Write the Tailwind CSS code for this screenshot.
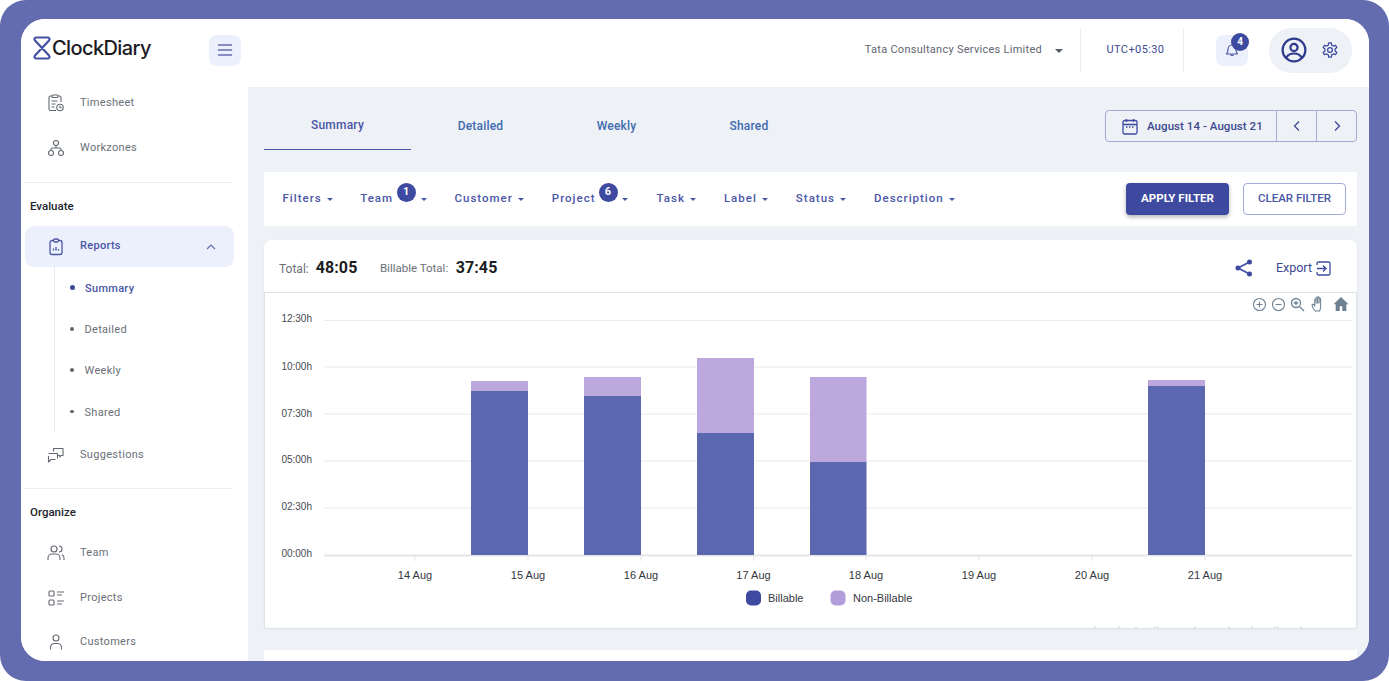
<!DOCTYPE html>
<html lang="en">
  <head>
    <meta charset="UTF-8" />
    <title>ClockDiary</title>
    <script src="https://cdn.jsdelivr.net/npm/@tailwindcss/browser@4"></script>
  </head>
  <body class="bg-white font-['Roboto',sans-serif]">
    <div class="h-[681px] w-[1389px] overflow-hidden rounded-[26px] bg-[#636cae] pt-[19px] pl-[21px]">
      <div class="flex h-[642px] w-[1348px] flex-col overflow-hidden rounded-[24px] bg-white">
        <!-- header -->
        <header class="flex h-[68px] shrink-0 items-center bg-white pb-[6px]">
          <div class="flex w-[227px] shrink-0 items-center pl-[12px]">
            <svg class="-mt-[4px] h-[24px] w-[18px]" viewBox="0 0 18 24" fill="none" stroke-width="2.2" stroke-linejoin="round">
              <path d="M3 1.500H15C16.500 1.500 17 3.200 16 4.400L2 19.600C1 20.800 1.500 22.500 3 22.500H15C16.500 22.500 17 20.800 16 19.600L2 4.400C1 3.200 1.500 1.500 3 1.500Z" stroke="#4451a3" />
            </svg>
            <span class="-mt-[4px] ml-[1px] font-['Inter',sans-serif] text-[20px] leading-none font-medium tracking-[-0.6px] text-[#1b1b1f]">ClockDiary</span>
            <button class="mr-[7px] ml-auto flex h-[31px] w-[32px] shrink-0 items-center justify-center rounded-[8px] bg-[#ecf0fd]">
              <svg class="h-[16px] w-[16px]" viewBox="0 0 16 16" fill="none" stroke="#636cae" stroke-width="1.5" stroke-linecap="round"><path d="M1.500 3h13M1.500 8h13M1.500 13h13" /></svg>
            </button>
          </div>
          <div class="flex flex-1 items-center justify-end">
            <span class="text-[11px] tracking-[0.27px] text-[#5f6670]">Tata Consultancy Services Limited</span>
            <span class="mt-[2px] ml-[13px] h-0 w-0 border-x-[4.5px] border-t-[4.5px] border-x-transparent border-t-[#555b66]"></span>
            <span class="ml-[17px] h-[45px] w-px bg-[#eceef2]"></span>
            <span class="w-[102px] pl-[7px] text-center text-[11px] tracking-[0.4px] text-[#3d4a8f]">UTC+05:30</span>
            <span class="h-[45px] w-px bg-[#eceef2]"></span>
            <div class="relative ml-[32px] flex h-[31px] w-[32px] items-center justify-center rounded-[8px] bg-[#ecf0fd]">
              <svg class="h-[16px] w-[16px]" viewBox="0 0 16 16" fill="none" stroke="#4a56a6" stroke-width="1.2" stroke-linejoin="round"><path d="M2.500 12c1-1 1.500-2 1.500-4.500 0-2.500 1.700-4.500 4-4.500s4 2 4 4.500c0 2.500.5 3.500 1.500 4.500Z" /><path d="M6.500 12.500a1.600 1.600 0 0 0 3 0" /></svg>
              <span class="absolute -top-[2px] left-[15px] flex h-[18px] w-[18px] items-center justify-center rounded-full bg-[#3d4a9f] text-[10px] font-bold text-white">4</span>
            </div>
            <div class="mr-[17px] ml-[21px] flex h-[45px] w-[83px] items-center rounded-[22px] bg-[#eef1f6] pl-[12px]">
              <svg class="h-[26px] w-[26px]" viewBox="0 0 26 26" fill="none" stroke="#2f3a8c" stroke-width="2.200"><circle cx="13" cy="13" r="11.400" /><circle cx="13" cy="10.500" r="3.600" /><path d="M5.500 20.500c1.500-3 4.500-4 7.500-4s6 1 7.500 4" /></svg>
              <svg class="ml-[14px] h-[18px] w-[18px]" viewBox="0 0 24 24" fill="none" stroke="#3d4a9f" stroke-width="1.700" stroke-linejoin="round"><path d="M10.300 2.500h3.400l.6 3 2.200 1.200 2.900-1 1.700 3-2.300 2v2.600l2.300 2-1.700 3-2.900-1-2.200 1.200-.6 3h-3.400l-.6-3-2.200-1.200-2.900 1-1.700-3 2.300-2v-2.600l-2.300-2 1.700-3 2.900 1 2.200-1.200Z" /><circle cx="12" cy="12" r="3.200" /></svg>
            </div>
          </div>
        </header>

        <div class="flex min-h-0 flex-1">
          <!-- sidebar -->
          <aside class="w-[227px] shrink-0 overflow-hidden bg-white text-[11px] tracking-[0.3px] text-[#6b7078]">
            <div class="-mt-[7px]">
              <a class="flex h-[45px] items-center pl-[26px]">
                <svg class="h-[18px] w-[18px]" viewBox="0 0 18 18" fill="none" stroke="#636873" stroke-width="1.100" stroke-linejoin="round"><path d="M9 16.500H3.500a1.500 1.500 0 0 1-1.500-1.500V3.500A1.500 1.500 0 0 1 3.500 2H5M11 2h1.500A1.500 1.500 0 0 1 14 3.500V8" /><rect x="5" y="1" width="6" height="2.500" rx="1" /><path d="M4.500 7h6M4.500 10h4M4.500 13h3" /><circle cx="13" cy="13.500" r="3.200" /><path d="M13 11.800v1.800h1.500" /></svg>
                <span class="ml-[15px] pt-[2px]">Timesheet</span>
              </a>
              <a class="flex h-[45px] items-center pl-[26px]">
                <svg class="h-[18px] w-[18px]" viewBox="0 0 18 18" fill="none" stroke="#636873" stroke-width="1.100"><circle cx="9" cy="4" r="2.500" /><circle cx="4" cy="14" r="2.500" /><circle cx="14" cy="14" r="2.500" /><path d="M9 6.500V9M4 11.500V10.500a1.500 1.500 0 0 1 1.500-1.500h7a1.500 1.500 0 0 1 1.500 1.500v1" /></svg>
                <span class="ml-[15px] pt-[2px]">Workzones</span>
              </a>
            </div>
            <div class="mt-[12px] mr-[15px] ml-[3px] h-px bg-[#eceef2]"></div>
            <p class="flex h-[43px] items-center pt-[5px] pl-[9px] text-[11.500px] font-medium tracking-normal text-[#23262d]">Evaluate</p>
            <a class="mr-[14px] ml-[4px] flex h-[41px] items-center rounded-[9px] bg-[#ecf0fd] pr-[18px] pl-[22px] text-[#4a56a6]">
              <svg class="h-[18px] w-[18px]" viewBox="0 0 18 18" fill="none" stroke="#4a56a6" stroke-width="1.300" stroke-linejoin="round"><rect x="3" y="2.500" width="12" height="14" rx="2" /><rect x="6.500" y="1" width="5" height="3" rx="1.500" fill="#ecf0fd" /><path d="M6.500 12.500v-2M9 12.500v-3.500M11.500 12.500v-1.500" /></svg>
              <span class="mb-[1px] ml-[15px] font-medium">Reports</span>
              <svg class="ml-auto h-[10px] w-[10px]" viewBox="0 0 10 10" fill="none" stroke="#636cae" stroke-width="1.200"><path d="M1 7l4-4 4 4" /></svg>
            </a>
            <div class="mt-[3px] ml-[33px] border-l border-[#e5ebf5]">
              <a class="-mt-[3px] flex h-[41.300px] items-center pl-[15px] font-medium text-[#4a56a6]"><span class="h-[5px] w-[5px] rounded-full bg-[#3d4a9f]"></span><span class="ml-[10px] pt-[4px]">Summary</span></a>
              <a class="flex h-[41.300px] items-center pl-[15px]"><span class="h-[3.500px] w-[3.500px] rounded-full bg-[#63666e]"></span><span class="ml-[11px] pt-[2px]">Detailed</span></a>
              <a class="flex h-[41.300px] items-center pl-[15px]"><span class="h-[3.500px] w-[3.500px] rounded-full bg-[#63666e]"></span><span class="ml-[11px] pt-[2px]">Weekly</span></a>
              <a class="flex h-[41.300px] items-center pl-[15px]"><span class="h-[3.500px] w-[3.500px] rounded-full bg-[#63666e]"></span><span class="ml-[11px] pt-[4px]">Shared</span></a>
            </div>
            <a class="flex h-[45px] items-center pl-[26px]">
              <svg class="h-[18px] w-[18px]" viewBox="0 0 18 18" fill="none" stroke="#636873" stroke-width="1.100" stroke-linejoin="round"><path d="M6.500 5.500V2.500h9.500v7h-2l-1 1.500-.5-1.500H11" /><path d="M1.500 7.500h9v6h-6.500l-2.500 2.500Z" stroke-dasharray="14 3" /></svg>
              <span class="ml-[15px] pt-[2px]">Suggestions</span>
            </a>
            <div class="mt-[11px] mr-[15px] ml-[3px] h-px bg-[#eceef2]"></div>
            <p class="flex h-[44px] items-center pt-[2px] pl-[9px] text-[11.500px] font-medium tracking-normal text-[#23262d]">Organize</p>
            <a class="-mt-[3px] flex h-[45px] items-center pl-[26px]">
              <svg class="h-[18px] w-[18px]" viewBox="0 0 18 18" fill="none" stroke="#636873" stroke-width="1.100"><circle cx="7" cy="5" r="3" /><path d="M1 16v-2a4 4 0 0 1 4-4h4a4 4 0 0 1 4 4v2M12 2a3 3 0 0 1 0 6M15 10.500a4 4 0 0 1 2 3.500v2" /></svg>
              <span class="ml-[15px] pt-[2px]">Team</span>
            </a>
            <a class="flex h-[45px] items-center pl-[26px]">
              <svg class="h-[18px] w-[18px]" viewBox="0 0 18 18" fill="none" stroke="#636873" stroke-width="1.100"><rect x="2" y="2" width="5" height="5" rx="1" /><rect x="2" y="11" width="5" height="5" rx="1" /><path d="M10 3h7M10 6h5M10 12h7M10 15h5" /></svg>
              <span class="ml-[15px] pt-[2px]">Projects</span>
            </a>
            <a class="flex h-[43px] items-center pl-[26px]">
              <svg class="h-[18px] w-[18px]" viewBox="0 0 18 18" fill="none" stroke="#636873" stroke-width="1.100"><circle cx="9" cy="5" r="3" /><path d="M3.500 16.500v-2a4 4 0 0 1 4-4h3a4 4 0 0 1 4 4v2" /></svg>
              <span class="ml-[15px] pt-[2px]">Customers</span>
            </a>
          </aside>

          <!-- main -->
          <main class="min-w-0 flex-1 bg-[#eef1f6] pr-[12px] pl-[16px]">
            <div class="flex h-[85px] items-start">
              <nav class="flex h-[63px] text-[12px] font-medium tracking-[0.2px]">
                <a class="flex w-[147px] items-center justify-center border-b border-[#4a56a6] pt-[14px] text-[#4a56a6]">Summary</a>
                <a class="flex w-[139px] items-center justify-center pt-[14px] text-[#3f6bb0]">Detailed</a>
                <a class="flex w-[133px] items-center justify-center pt-[14px] text-[#3f6bb0]">Weekly</a>
                <a class="flex w-[132px] items-center justify-center pt-[14px] text-[#3f6bb0]">Shared</a>
              </nav>
              <div class="mt-[23px] ml-auto flex h-[32px] items-stretch rounded-[4px] border border-[#a4aad6] text-[#3d4a8f]">
                <span class="flex w-[171px] items-center border-r border-[#a4aad6] pl-[16px] text-[11.500px] font-medium tracking-[0.05px]">
                  <svg class="mr-[9px] h-[17px] w-[16px]" viewBox="0 0 16 17" fill="none" stroke="#3d4a9f" stroke-width="1.300"><rect x="1" y="2.500" width="14" height="13.500" rx="1.500" /><path d="M1 6.500h14M4.500 1v3M11.500 1v3" /><path d="M4 9h8" stroke-dasharray="1.500 1.500" /></svg>
                  <span class="pt-[1px]">August 14 - August 21</span>
                </span>
                <span class="flex w-[40px] items-center justify-center border-r border-[#a4aad6]"><svg class="h-[12px] w-[12px]" viewBox="0 0 12 12" fill="none" stroke="#3d4a8f" stroke-width="1.300"><path d="M8 1.500L3.500 6 8 10.500" /></svg></span>
                <span class="flex w-[39px] items-center justify-center"><svg class="h-[12px] w-[12px]" viewBox="0 0 12 12" fill="none" stroke="#3d4a8f" stroke-width="1.300"><path d="M4 1.500L8.500 6 4 10.500" /></svg></span>
              </div>
            </div>

            <!-- filters -->
            <div class="flex h-[54px] items-center bg-white pr-[11px] pl-[18.500px] text-[11.500px] font-medium tracking-[1px] text-[#4a56a6]">
              <span class="flex items-center">Filters<i class="ml-[5px] h-0 w-0 border-x-[3px] border-t-[3px] border-x-transparent border-t-[#4a56a6]"></i></span>
              <span class="relative ml-[27.500px] flex items-center">Team<b class="relative -top-[7px] ml-[3.500px] flex h-[19px] w-[19px] items-center justify-center rounded-full bg-[#3d4a9f] text-[11px] font-bold tracking-normal text-white">1</b><i class="ml-[5px] h-0 w-0 border-x-[3px] border-t-[3px] border-x-transparent border-t-[#4a56a6]"></i></span>
              <span class="ml-[28px] flex items-center">Customer<i class="ml-[5px] h-0 w-0 border-x-[3px] border-t-[3px] border-x-transparent border-t-[#4a56a6]"></i></span>
              <span class="ml-[28px] flex items-center">Project<b class="relative -top-[7px] ml-[3px] flex h-[19px] w-[19px] items-center justify-center rounded-full bg-[#3d4a9f] text-[11px] font-bold tracking-normal text-white">6</b><i class="ml-[4px] h-0 w-0 border-x-[3px] border-t-[3px] border-x-transparent border-t-[#4a56a6]"></i></span>
              <span class="ml-[29px] flex items-center">Task<i class="ml-[5px] h-0 w-0 border-x-[3px] border-t-[3px] border-x-transparent border-t-[#4a56a6]"></i></span>
              <span class="ml-[28px] flex items-center">Label<i class="ml-[5px] h-0 w-0 border-x-[3px] border-t-[3px] border-x-transparent border-t-[#4a56a6]"></i></span>
              <span class="ml-[28px] flex items-center">Status<i class="ml-[5px] h-0 w-0 border-x-[3px] border-t-[3px] border-x-transparent border-t-[#4a56a6]"></i></span>
              <span class="ml-[28px] flex items-center">Description<i class="ml-[5px] h-0 w-0 border-x-[3px] border-t-[3px] border-x-transparent border-t-[#4a56a6]"></i></span>
              <button class="ml-auto h-[32px] w-[103px] rounded-[4px] bg-[#3d4a9f] text-[11.500px] font-bold tracking-normal text-white shadow-[0_2px_4px_rgba(0,0,0,0.3)]">APPLY FILTER</button>
              <button class="ml-[14px] h-[32px] w-[103px] rounded-[4px] border border-[#a4aad6] text-[11.500px] font-medium tracking-normal text-[#4a56a6]">CLEAR FILTER</button>
            </div>

            <!-- chart card -->
            <section class="mt-[14px] h-[388px] rounded-t-[8px] rounded-b-[4px] bg-white shadow-[0_1px_2px_rgba(0,0,0,0.08)]">
              <div class="flex h-[52px] items-center pt-[4px] pr-[26px] pl-[15px]">
                <span class="mt-[2px] text-[12px] text-[#6b7078]">Total:</span>
                <span class="ml-[7px] text-[16px] font-bold tracking-[0.1px] text-[#1c1d22]">48:05</span>
                <span class="mt-[2px] ml-[22.500px] text-[11.500px] text-[#6b7078]">Billable Total:</span>
                <span class="ml-[7.500px] text-[16px] font-bold tracking-[0.1px] text-[#1c1d22]">37:45</span>
                <svg class="ml-auto h-[18px] w-[18px]" viewBox="0 0 18 18" fill="#3d4a9f" stroke="#3d4a9f" stroke-width="1.600"><circle cx="14.500" cy="3" r="1.700" /><circle cx="14.500" cy="15" r="1.700" /><circle cx="3" cy="9" r="1.700" /><path d="M14.500 3L3 9l11.500 6" fill="none" /></svg>
                <span class="ml-[23px] text-[12.500px] text-[#3d4a8f]">Export</span>
                <svg class="ml-[4px] h-[15px] w-[15px]" viewBox="0 0 15 15" fill="none" stroke="#3d4a9f" stroke-width="1.300"><path d="M1 4V2.500A1.500 1.500 0 0 1 2.500 1h10A1.500 1.500 0 0 1 14 2.500v10a1.500 1.500 0 0 1-1.500 1.500h-10A1.500 1.500 0 0 1 1 12.500V11M1 7.500h9M7 4.500l3 3-3 3" /></svg>
              </div>
              <div class="relative h-[336px] overflow-hidden border-x border-t border-[#e2e3e6]">
                <svg class="block h-[336px] w-[1091px]" viewBox="265 293 1091 336" font-family="Liberation Sans, sans-serif">
                  <g stroke="#e9eaec" stroke-width="1.200">
                    <path d="M324 320.500H1352M324 367H1352M324 414H1352M324 461H1352M324 508H1352" />
                  </g>
                  <path d="M324 555.500H1352" stroke="#e6e6e8" stroke-width="2" />
                  <g stroke="#e6e6e8"><path d="M415 556v5M528 556v5M641 556v5M753.500 556v5M866 556v5M979 556v5M1092 556v5M1205 556v5" /></g>
                  <g fill="#bda8de">
                    <rect x="471" y="381" width="57" height="10" />
                    <rect x="584" y="377" width="57" height="19" />
                    <rect x="697" y="358" width="57" height="75" />
                    <rect x="810" y="377" width="56.500" height="85" />
                    <rect x="1148" y="380" width="57" height="6" />
                  </g>
                  <g fill="#5b67ae">
                    <rect x="471" y="391" width="57" height="164" />
                    <rect x="584" y="396" width="57" height="159" />
                    <rect x="697" y="433" width="57" height="122" />
                    <rect x="810" y="462" width="56.500" height="93" />
                    <rect x="1148" y="386" width="57" height="169" />
                  </g>
                  <g font-size="10" fill="#444a52" text-anchor="end">
                    <text x="312" y="322">12:30h</text>
                    <text x="312" y="370">10:00h</text>
                    <text x="312" y="417">07:30h</text>
                    <text x="312" y="463">05:00h</text>
                    <text x="312" y="510">02:30h</text>
                    <text x="312" y="557">00:00h</text>
                  </g>
                  <g font-size="11" fill="#33373e" text-anchor="middle">
                    <text x="415" y="579">14 Aug</text>
                    <text x="528" y="579">15 Aug</text>
                    <text x="641" y="579">16 Aug</text>
                    <text x="753.500" y="579">17 Aug</text>
                    <text x="866" y="579">18 Aug</text>
                    <text x="979" y="579">19 Aug</text>
                    <text x="1092" y="579">20 Aug</text>
                    <text x="1205" y="579">21 Aug</text>
                  </g>
                  <rect x="746" y="590.500" width="15" height="15" rx="5" fill="#3d4a9f" />
                  <text x="768" y="602" font-size="11" fill="#33373e">Billable</text>
                  <rect x="830.500" y="590.500" width="15" height="15" rx="5" fill="#b39ddb" />
                  <text x="853" y="602" font-size="11" fill="#33373e">Non-Billable</text>
                  <path d="M1095 626.500v2M1119 626.500v2M1136 626.500v2M1155 626.500v2M1158 626.500v2M1195 626.500v2M1229 626.500v2M1252 626.500v2M1275 626.500v2M1278 626.500v2M1301 626.500v2" stroke="#c4c5c9" />
                </svg>
                <!-- chart toolbar -->
                <div class="absolute top-[3px] right-[7px] flex items-center gap-[4px]">
                  <svg class="h-[15px] w-[15px]" viewBox="0 0 15 15" fill="none" stroke="#6e8192" stroke-width="1.100"><circle cx="7.500" cy="7.500" r="6" /><path d="M4.500 7.500h6M7.500 4.500v6" /></svg>
                  <svg class="h-[15px] w-[15px]" viewBox="0 0 15 15" fill="none" stroke="#6e8192" stroke-width="1.100"><circle cx="7.500" cy="7.500" r="6" /><path d="M4.500 7.500h6" /></svg>
                  <svg class="h-[15px] w-[15px]" viewBox="0 0 15 15" fill="none" stroke="#6e8192" stroke-width="1.300"><circle cx="6" cy="6" r="4.500" /><path d="M9.500 9.500l4.500 4.500M3.800 6h4.400M6 3.800v4.400" /></svg>
                  <svg class="ml-[2px] h-[16px] w-[16px]" viewBox="0 0 15 15" fill="none" stroke="#6e8192" stroke-width="1"><path d="M4 14c-1-1-3-4-3-5.500s1.500-.8 2.500.5V3.500c0-1 1.300-1 1.300 0V7 2c0-1 1.400-1 1.400 0v5-5.500c0-1 1.400-1 1.400 0V7 3c0-1 1.400-1 1.400 0v7c0 2-.5 3-1 4Z" /></svg>
                  <svg class="ml-[2px] h-[16px] w-[16px]" viewBox="0 0 15 15" fill="#6e8192"><path d="M7.500 1L0.500 7.800h2V14h3.800V9.500h2.400V14h3.800V7.800h2Z" /></svg>
                </div>
              </div>
            </section>

            <!-- next card, cut off by the frame -->
            <section class="mt-[22px] h-[40px] bg-white"></section>
          </main>
        </div>
      </div>
    </div>
  </body>
</html>
